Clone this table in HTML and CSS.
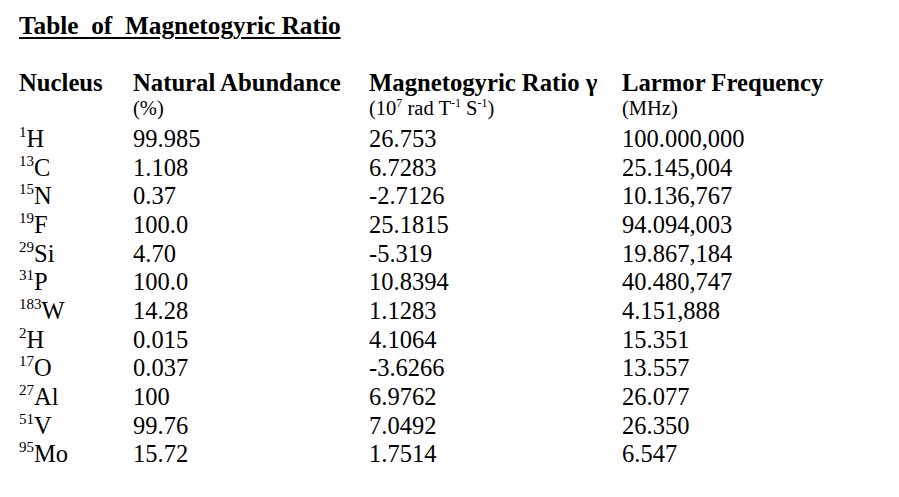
FILE: index.html
```html
<!DOCTYPE html>
<html>
<head>
<meta charset="utf-8">
<link rel="stylesheet" href="styles.css">
</head>
<body>
<div class="page">
  <h1 class="title">Table&nbsp; of&nbsp; Magnetogyric Ratio</h1>
  <div class="table">
    <div class="head"><div class="h">Nucleus</div></div>
    <div class="head"><div class="h">Natural Abundance</div><div class="sub">(%)</div></div>
    <div class="head"><div class="h">Magnetogyric Ratio γ</div><div class="sub">(10<span class="ss">7</span> rad T<span class="ss">-1</span> S<span class="ss">-1</span>)</div></div>
    <div class="head"><div class="h">Larmor Frequency</div><div class="sub">(MHz)</div></div>

    <div class="c"><span class="iso">1</span>H</div><div class="c">99.985</div><div class="c">26.753</div><div class="c">100.000,000</div>
    <div class="c"><span class="iso">13</span>C</div><div class="c">1.108</div><div class="c">6.7283</div><div class="c">25.145,004</div>
    <div class="c"><span class="iso">15</span>N</div><div class="c">0.37</div><div class="c">-2.7126</div><div class="c">10.136,767</div>
    <div class="c"><span class="iso">19</span>F</div><div class="c">100.0</div><div class="c">25.1815</div><div class="c">94.094,003</div>
    <div class="c"><span class="iso">29</span>Si</div><div class="c">4.70</div><div class="c">-5.319</div><div class="c">19.867,184</div>
    <div class="c"><span class="iso">31</span>P</div><div class="c">100.0</div><div class="c">10.8394</div><div class="c">40.480,747</div>
    <div class="c"><span class="iso">183</span>W</div><div class="c">14.28</div><div class="c">1.1283</div><div class="c">4.151,888</div>
    <div class="c"><span class="iso">2</span>H</div><div class="c">0.015</div><div class="c">4.1064</div><div class="c">15.351</div>
    <div class="c"><span class="iso">17</span>O</div><div class="c">0.037</div><div class="c">-3.6266</div><div class="c">13.557</div>
    <div class="c"><span class="iso">27</span>Al</div><div class="c">100</div><div class="c">6.9762</div><div class="c">26.077</div>
    <div class="c"><span class="iso">51</span>V</div><div class="c">99.76</div><div class="c">7.0492</div><div class="c">26.350</div>
    <div class="c"><span class="iso">95</span>Mo</div><div class="c">15.72</div><div class="c">1.7514</div><div class="c">6.547</div>
  </div>
</div>
</body>
</html>
```
FILE: styles.css
```css
html, body {
  margin: 0;
  padding: 0;
  background: #ffffff;
  color: #000000;
  font-family: "Liberation Serif", "Times New Roman", serif;
}
.page {
  padding: 10px 0 0 19px;
}
.title {
  margin: 0;
  font-size: 25.3px;
  line-height: 30px;
  font-weight: bold;
  text-decoration: underline;
  text-decoration-thickness: 2px;
  text-underline-offset: 3px;
}
.table {
  margin-top: 30px;
  display: grid;
  grid-template-columns: 114px 236px 253px 1fr;
}
.head {
  padding-bottom: 3px;
}
.h {
  font-weight: bold;
  font-size: 24.7px;
  line-height: 25px;
  white-space: nowrap;
}
.sub {
  font-size: 20.5px;
  line-height: 27px;
  white-space: nowrap;
}
.ss {
  font-size: 12px;
  line-height: 0;
  vertical-align: 8px;
}
.c {
  font-size: 24.5px;
  line-height: 28.65px;
  white-space: nowrap;
}
.iso {
  font-size: 15px;
  line-height: 0;
  vertical-align: 10px;
}
```
